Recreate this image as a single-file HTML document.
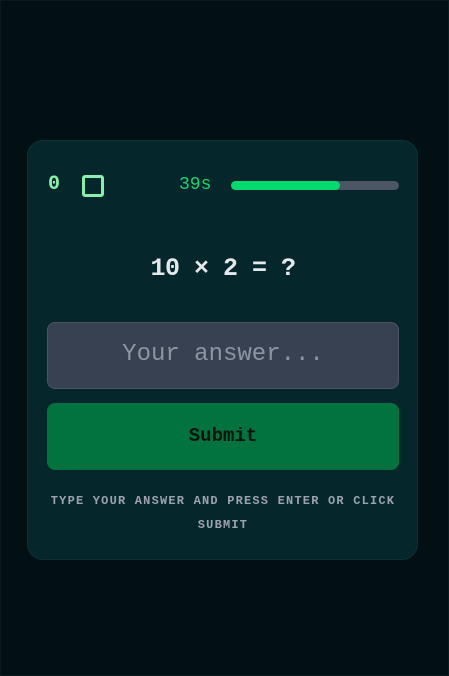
<!DOCTYPE html>
<html><head><meta charset="utf-8"><style>
html,body{margin:0;padding:0}
body{width:449px;height:676px;background:#020f13;position:relative;overflow:hidden;font-family:"Liberation Mono",monospace;box-shadow:inset 0 0 0 1px #0a1a1e}
.card{position:absolute;left:27px;top:140px;width:391px;height:420px;background:#05272b;border-radius:16px;border:1px solid #0c3236;box-sizing:border-box}
.zero{position:absolute;left:48px;top:173px;color:#86efac;font-size:20px;font-weight:bold;line-height:24px}
.sq{position:absolute;left:82px;top:175px;width:16px;height:16px;border:3px solid #86efac;border-radius:3px}
.t{position:absolute;left:179px;top:174px;color:#10d86c;font-size:18px;line-height:22px}
.bar{position:absolute;left:231px;top:181px;width:168px;height:9px;background:#4b5563;border-radius:5px}
.fill{width:109px;height:9px;background:#02d96e;border-radius:5px}
.q{position:absolute;left:0;width:446px;top:254px;text-align:center;color:#e5e7eb;font-size:25px;font-weight:bold;line-height:30px;letter-spacing:-0.5px}
.in{position:absolute;left:47px;top:322px;width:352px;height:67px;background:#374151;border:1px solid #4b5563;border-radius:8px;box-sizing:border-box;color:#8d95a3;font-size:24px;text-align:center;line-height:64px}
.btn{position:absolute;left:47px;top:403px;width:352px;height:67px;background:#02723f;border-radius:8px;color:#04140c;font-size:19px;font-weight:bold;text-align:center;line-height:67px}
.hint{position:absolute;left:45px;width:356px;top:489px;text-align:center;color:#9ca3af;font-size:12px;font-weight:bold;line-height:24px;letter-spacing:1.2px}
</style></head><body>
<div class="card"></div>
<div class="zero">0</div>
<div class="sq"></div>
<div class="t">39s</div>
<div class="bar"><div class="fill"></div></div>
<div class="q">10 × 2 = ?</div>
<div class="in">Your answer...</div>
<div class="btn">Submit</div>
<div class="hint">TYPE YOUR ANSWER AND PRESS ENTER OR CLICK SUBMIT</div>
</body></html>
